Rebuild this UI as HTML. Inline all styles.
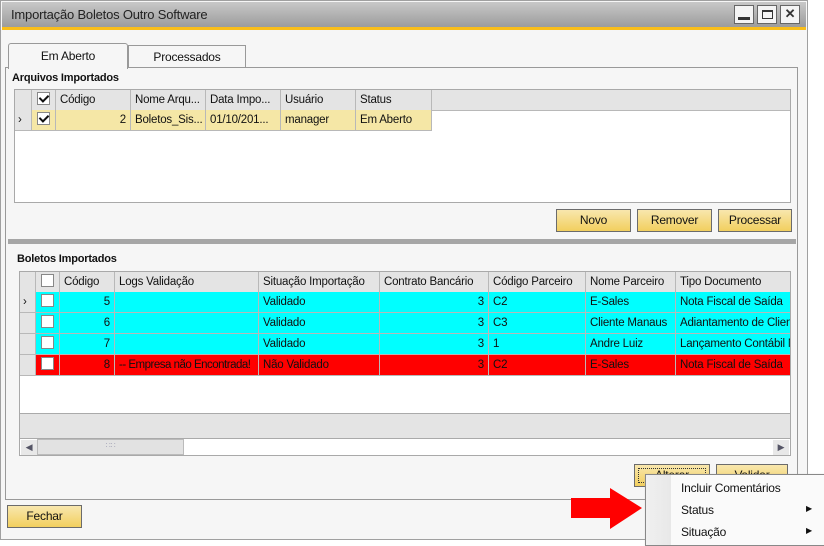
<!DOCTYPE html><html><head><meta charset="utf-8"><style>
*{margin:0;padding:0;box-sizing:border-box}
body{width:824px;height:544px;background:#fff;font-family:"Liberation Sans",sans-serif;font-size:12px;color:#111;position:relative;overflow:hidden;letter-spacing:-0.2px}
.a{position:absolute}
.btn{position:absolute;height:23px;border:1px solid #6b6b6b;background:linear-gradient(#f8e7ae,#f2cf5e);text-align:center;line-height:21px;font-size:12px;color:#111}
.g{position:absolute;border:1px solid #a9a9a9;background:#fff}
.row{position:absolute;left:0;right:0;display:flex;height:21px;font-size:11.5px}
.row div{border-right:1px solid #b8b8b8;border-bottom:1px solid #b8b8b8;padding:0 4px;line-height:20px;white-space:nowrap;overflow:hidden;flex:none}
.h div{background:#e4e4e4}
.r{text-align:right}
.cb{display:inline-block;width:13px;height:13px;border:1px solid #888;background:#fff;vertical-align:middle;margin-top:-2px;position:relative}
.ck::after{content:"";position:absolute;left:3px;top:0px;width:4px;height:7px;border:solid #111;border-width:0 2px 2px 0;transform:rotate(45deg)}
</style></head><body>
<div class="a" style="left:0;top:0;width:808px;height:540px;border:1px solid #a0a0a0;background:#f6f6f6"></div>
<div class="a" style="left:2px;top:2px;width:804px;height:25px;background:linear-gradient(#c8c8c8,#9c9c9c)"></div>
<div class="a" style="left:2px;top:27px;width:804px;height:3px;background:#f9be1a"></div>
<div class="a" style="left:11px;top:7px;font-size:13px;color:#222">Importação Boletos Outro Software</div>
<div class="a" style="left:734px;top:5px;width:20px;height:19px;border:1px solid #666;background:#f4f4f4"><div class="a" style="left:3px;top:11px;width:12px;height:3px;background:#333"></div></div>
<div class="a" style="left:757px;top:5px;width:20px;height:19px;border:1px solid #666;background:#f4f4f4"><div class="a" style="left:4px;top:4px;width:11px;height:9px;border:1px solid #333;border-top-width:2px"></div></div>
<div class="a" style="left:780px;top:5px;width:20px;height:19px;border:1px solid #666;background:#f4f4f4;text-align:center;font-weight:bold;font-size:13px;line-height:16px;color:#333">✕</div>
<div class="a" style="left:5px;top:67px;width:793px;height:433px;border:1px solid #999;background:#f6f6f6"></div>
<div class="a" style="left:8px;top:43px;width:120px;height:26px;border:1px solid #999;border-bottom:none;border-radius:3px 3px 0 0;background:#f6f6f6;text-align:center;line-height:24px">Em Aberto</div>
<div class="a" style="left:128px;top:45px;width:118px;height:22px;border:1px solid #999;border-bottom:none;background:#f6f6f6;text-align:center;line-height:22px">Processados</div>
<div class="a" style="left:12px;top:72px;font-weight:bold;font-size:11px">Arquivos Importados</div>
<div class="g" style="left:14px;top:89px;width:777px;height:114px">
<div class="row h" style="top:0"><div style="width:17px"></div><div style="width:24px;padding:0 5px"><span class="cb ck"></span></div><div style="width:75px">Código</div><div style="width:75px">Nome Arqu...</div><div style="width:75px">Data Impo...</div><div style="width:75px">Usuário</div><div style="width:76px">Status</div><div style="flex:1;border-right:none"></div></div>
<div class="row" style="top:20px"><div style="width:17px;background:#e4e4e4;padding:0 3px">›</div><div style="width:24px;padding:0 5px;background:#f5e7a6"><span class="cb ck"></span></div><div class="r" style="width:75px;background:#f5e7a6">2</div><div style="width:75px;background:#f5e7a6">Boletos_Sis...</div><div style="width:75px;background:#f5e7a6">01/10/201...</div><div style="width:75px;background:#f5e7a6">manager</div><div style="width:76px;background:#f5e7a6">Em Aberto</div></div>
</div>
<div class="btn" style="left:556px;top:209px;width:75px">Novo</div>
<div class="btn" style="left:637px;top:209px;width:75px">Remover</div>
<div class="btn" style="left:718px;top:209px;width:74px">Processar</div>
<div class="a" style="left:8px;top:239px;width:788px;height:5px;background:#a6a6a6"></div>
<div class="a" style="left:17px;top:253px;font-weight:bold;font-size:11px">Boletos Importados</div>
<div class="g" style="left:19px;top:271px;width:772px;height:185px;overflow:hidden">
<div class="row h" style="top:0"><div style="width:16px"></div><div style="width:24px;padding:0 5px"><span class="cb"></span></div><div style="width:55px">Código</div><div style="width:144px">Logs Validação</div><div style="width:121px">Situação Importação</div><div style="width:109px">Contrato Bancário</div><div style="width:97px">Código Parceiro</div><div style="width:90px">Nome Parceiro</div><div style="width:120px;border-right:none">Tipo Documento</div></div>
<div class="row" style="top:20px;background:#0ff"><div style="width:16px;background:#e4e4e4;padding:0 3px">›</div><div style="width:24px;padding:0 5px"><span class="cb"></span></div><div class="r" style="width:55px">5</div><div style="width:144px"></div><div style="width:121px">Validado</div><div class="r" style="width:109px">3</div><div style="width:97px">C2</div><div style="width:90px">E-Sales</div><div style="width:120px;border-right:none">Nota Fiscal de Saída</div></div>
<div class="row" style="top:41px;background:#0ff"><div style="width:16px;background:#e4e4e4"></div><div style="width:24px;padding:0 5px"><span class="cb"></span></div><div class="r" style="width:55px">6</div><div style="width:144px"></div><div style="width:121px">Validado</div><div class="r" style="width:109px">3</div><div style="width:97px">C3</div><div style="width:90px">Cliente Manaus</div><div style="width:120px;border-right:none">Adiantamento de Clien</div></div>
<div class="row" style="top:62px;background:#0ff"><div style="width:16px;background:#e4e4e4"></div><div style="width:24px;padding:0 5px"><span class="cb"></span></div><div class="r" style="width:55px">7</div><div style="width:144px"></div><div style="width:121px">Validado</div><div class="r" style="width:109px">3</div><div style="width:97px">1</div><div style="width:90px">Andre Luiz</div><div style="width:120px;border-right:none">Lançamento Contábil M</div></div>
<div class="row" style="top:83px;background:#f00"><div style="width:16px;background:#e4e4e4"></div><div style="width:24px;padding:0 5px"><span class="cb"></span></div><div class="r" style="width:55px">8</div><div style="width:144px;letter-spacing:-0.5px">-- Empresa não Encontrada!</div><div style="width:121px">Não Validado</div><div class="r" style="width:109px">3</div><div style="width:97px">C2</div><div style="width:90px">E-Sales</div><div style="width:120px;border-right:none">Nota Fiscal de Saída</div></div>
<div class="a" style="left:0;top:141px;width:770px;height:26px;background:#e4e4e4;border-top:1px solid #aaa;border-bottom:1px solid #aaa"></div>
<div class="a" style="left:1px;top:168px;width:16px;height:15px;background:#e8e8e8;color:#556;font-size:9px;line-height:15px;text-align:center">◀</div>
<div class="a" style="left:17px;top:167px;width:147px;height:16px;background:#e2e2e2;border:1px solid #bbb;text-align:center;color:#aab;font-size:8px;line-height:12px">∷∷</div>
<div class="a" style="left:753px;top:168px;width:16px;height:15px;background:#e8e8e8;color:#556;font-size:9px;line-height:15px;text-align:center">▶</div>
</div>
<div class="btn" style="left:634px;top:464px;width:76px"><div class="a" style="left:3px;top:3px;right:3px;bottom:3px;border:1px dotted #333"></div>Alterar</div>
<div class="btn" style="left:716px;top:464px;width:72px">Validar</div>
<div class="btn" style="left:7px;top:505px;width:75px">Fechar</div>
<svg class="a" style="left:570px;top:488px" width="74" height="42"><polygon points="1,10 40,10 40,0 72,20 40,41 40,30 1,30" fill="#f00"/></svg>
<div class="a" style="left:645px;top:474px;width:180px;height:72px;background:#fafafa;border:1px solid #888;box-shadow:1px 1px 2px #aaa">
<div class="a" style="left:0;top:0;width:25px;height:100%;background:linear-gradient(90deg,#f0f0f0,#e8e8e8)"></div>
<div class="a" style="left:35px;top:6px;color:#111">Incluir Comentários</div>
<div class="a" style="left:35px;top:28px">Status</div><div class="a" style="left:160px;top:29px;font-size:8px">▶</div>
<div class="a" style="left:35px;top:50px">Situação</div><div class="a" style="left:160px;top:51px;font-size:8px">▶</div>
</div>
</body></html>
